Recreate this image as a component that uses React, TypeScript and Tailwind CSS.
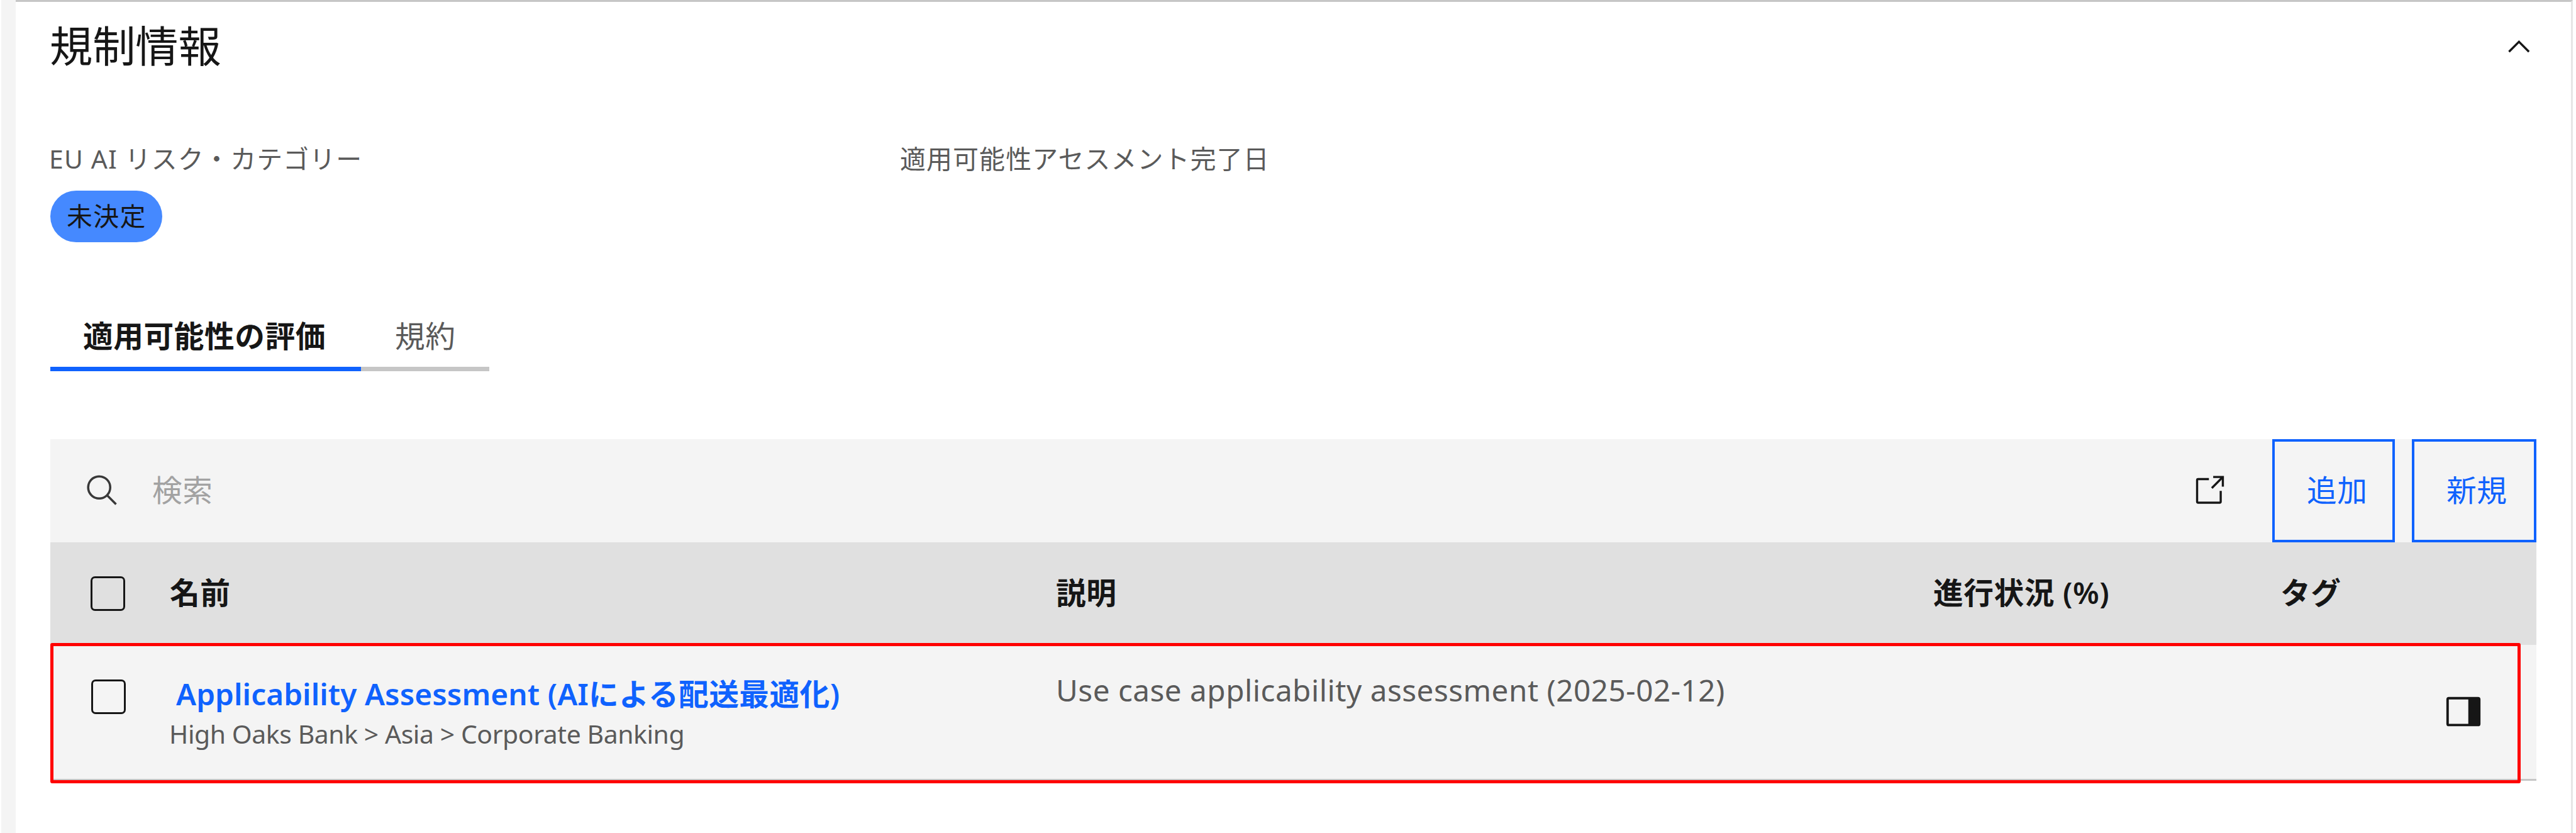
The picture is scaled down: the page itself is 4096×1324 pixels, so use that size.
import React from "react";

const labelText = "text-[40.9px] leading-[56px] tracking-[1.15px] text-[#5a5a5a]";

function ChevronUp() {
  return (
    <svg className="size-[54.6px]" viewBox="0 0 16 16" fill="#161616">
      <path d="M8 5L13 10 12.3 10.7 8 6.4 3.7 10.7 3 10z" />
    </svg>
  );
}

function SearchIcon() {
  return (
    <svg className="size-[56px] shrink-0" viewBox="0 0 32 32" fill="#393939">
      <path d="M29,27.5859l-7.5521-7.5521a11.0177,11.0177,0,1,0-1.4141,1.4141L27.5859,29ZM4,13a9,9,0,1,1,9,9A9.01,9.01,0,0,1,4,13Z" />
    </svg>
  );
}

function LaunchIcon() {
  return (
    <svg className="size-[54.6px] shrink-0" viewBox="0 0 32 32" fill="#161616">
      <path d="M26,28H6a2.0027,2.0027,0,0,1-2-2V6A2.0027,2.0027,0,0,1,6,4H16V6H6V26H26V16h2V26A2.0027,2.0027,0,0,1,26,28Z" />
      <path d="M20 2V4H26.586L18 12.586 19.414 14 28 5.414V12H30V2z" />
    </svg>
  );
}

function SidePanelIcon() {
  return (
    <svg className="size-[62px] shrink-0" viewBox="0 0 32 32" fill="#161616">
      <path d="M28,4H4A2,2,0,0,0,2,6V26a2,2,0,0,0,2,2H28a2,2,0,0,0,2-2V6A2,2,0,0,0,28,4ZM4,6H20V26H4Z" />
    </svg>
  );
}

function Checkbox() {
  return <span className="block size-[55px] rounded-[7px] border-[3.4px] border-[#161616]" />;
}

function ActionButton({ label, width }: { label: string; width: string }) {
  return (
    <button
      className={`${width} flex h-full items-center border-[4px] border-[#0f62fe] pb-[3px] pl-[51px] text-[47.7px] leading-[64px] tracking-[0.55px] text-[#0f62fe]`}
    >
      {label}
    </button>
  );
}

export default function App() {
  return (
    <div className="flex h-[1324px] w-[4096px] overflow-hidden bg-white pl-[2px] font-['Noto_Sans','Noto_Sans_CJK_JP',sans-serif] text-[#161616]">
      <div className="w-[23px] shrink-0 bg-[#f4f4f4]" />
      <section className="flex w-[4066px] shrink-0 flex-col border-t-[3px] border-r-[3px] border-t-[#c6c6c6] border-r-[#e6e6e6] pr-[55px] pl-[55px]">
        <header className="flex h-[140px] items-center justify-between">
          <h2 className="-ml-[1px] text-[68.2px] leading-[96px]">規制情報</h2>
          <span className="pt-[3px]">
            <ChevronUp />
          </span>
        </header>

        <div className="mt-[81px] flex h-[161px]">
          <div className="w-[1351px]">
            <div className={`${labelText} -ml-[2px]`}>EU AI リスク・カテゴリー</div>
            <span className="mt-[23px] flex h-[82px] w-[178px] items-center rounded-full bg-[#4589ff] pb-[3px] pl-[26px] text-[40.9px] leading-[56px] tracking-[1.3px]">
              未決定
            </span>
          </div>
          <div className={labelText}>適用可能性アセスメント完了日</div>
        </div>

        <nav className="mt-[95px] flex h-[110px] text-[47.7px] leading-[107px] tracking-[0.55px]">
          <div className="w-[494px] border-b-[7px] border-[#0f62fe] pl-[52px] font-semibold">適用可能性の評価</div>
          <div className="w-[204px] border-b-[7px] border-[#c6c6c6] pl-[54px] text-[#5a5a5a]">規約</div>
        </nav>

        <div className="mt-[108px] flex h-[164px] w-[3953px] items-center bg-[#f4f4f4]">
          <div className="flex flex-1 items-center pl-[55px]">
            <SearchIcon />
            <span className="ml-[51px] pb-[3px] text-[47.7px] leading-[64px] tracking-[0.55px] text-[#a2a2a2]">検索</span>
          </div>
          <LaunchIcon />
          <div className="ml-[73px] flex h-full gap-[27px]">
            <ActionButton label="追加" width="w-[195px]" />
            <ActionButton label="新規" width="w-[198px]" />
          </div>
        </div>

        <div className="flex h-[163px] w-[3953px] items-center bg-[#e0e0e0] text-[47.7px] leading-[64px] font-semibold tracking-[0.55px]">
          <div className="w-[190px] pl-[64px]">
            <Checkbox />
          </div>
          <div className="w-[1409px] pb-[3px]">名前</div>
          <div className="w-[1395px] pb-[3px]">説明</div>
          <div className="w-[552px] pb-[3px]">進行状況 (%)</div>
          <div className="pb-[3px]">タグ</div>
        </div>

        <div className="relative flex h-[216px] w-[3953px] border-b-[3px] border-[#c6c6c6] bg-[#f4f4f4]">
          <div className="w-[190px] pt-[55px] pl-[65px]">
            <Checkbox />
          </div>
          <div className="w-[1409px] whitespace-nowrap">
            <a className="mt-[46px] ml-[10px] block text-[47.7px] leading-[64px] font-semibold text-[#0f62fe]">
              <span className="tracking-[0.08px]">Applicability Assessment (AI</span>
              <span className="tracking-[0.45px]">による配送最適化)</span>
            </a>
            <div className="-ml-[1px] mt-[3px] text-[40.9px] leading-[56px] tracking-[-0.42px] text-[#5a5a5a]">
              High Oaks Bank &gt; Asia &gt; Corporate Banking
            </div>
          </div>
          <div className="w-[1395px] pt-[40px] text-[47.7px] leading-[64px] tracking-[0.48px] text-[#5a5a5a]">
            Use case applicability assessment (2025-02-12)
          </div>
          <div className="flex flex-1 items-start justify-end pt-[75px] pr-[85px]">
            <SidePanelIcon />
          </div>
          <div className="absolute top-[-3px] left-0 h-[223px] w-[3928px] rounded-[3px] border-[5.5px] border-[#ff0000]" />
        </div>
      </section>
    </div>
  );
}
